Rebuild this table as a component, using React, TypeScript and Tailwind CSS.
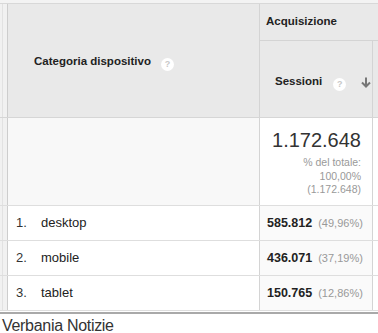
import React from "react";

const Help = () => (
  <span className="inline-flex h-[13px] w-[13px] items-center justify-center rounded-full bg-white text-[9px] font-bold leading-none text-[#c8c8c8]">
    ?
  </span>
);

const rows = [
  { n: "1.", label: "desktop", value: "585.812", pct: "(49,96%)" },
  { n: "2.", label: "mobile", value: "436.071", pct: "(37,19%)" },
  { n: "3.", label: "tablet", value: "150.765", pct: "(12,86%)" },
];

export default function App() {
  return (
    <div
      className="h-[333px] w-[378px] overflow-hidden bg-white text-[#222]"
      style={{ fontFamily: '"Liberation Sans", Arial, sans-serif' }}
    >
      {/* top strip */}
      <div className="h-[3px] bg-[#f3f3f3]" />
      <div className="h-px bg-[#d8d8d8]" />

      {/* header */}
      <div className="flex h-[114px] border-b border-[#d6d6d6] bg-[#e9e9e9]">
        <div className="flex w-[8px] shrink-0 border-r border-[#cdcdcd] bg-[#f1f1f1]">
          <div className="ml-[2px] w-px bg-[#e2e2e2]" />
        </div>
        <div className="flex w-[252px] shrink-0 items-center border-r border-[#d4d4d4] pl-[26px] pt-[3px]">
          <span className="text-[11.5px] font-bold text-[#222]">Categoria dispositivo</span>
          <span className="ml-[10px]">
            <Help />
          </span>
        </div>
        <div className="flex flex-1 flex-col">
          <div className="flex h-[37px] items-center border-b border-[#d4d4d4] pl-[6px]">
            <span className="text-[11.5px] font-bold text-[#222]">Acquisizione</span>
          </div>
          <div className="flex flex-1">
            <div className="flex w-[113px] shrink-0 items-center border-r border-[#d4d4d4] pl-[15px] pt-[6px]">
              <span className="text-[11.5px] font-bold text-[#222]">Sessioni</span>
              <span className="ml-[11px]">
                <Help />
              </span>
              <svg className="ml-[15px]" width="10" height="11" viewBox="0 0 10 11">
                <path d="M5 0.5 V9" stroke="#777" strokeWidth="2" fill="none" />
                <path d="M1 5.5 L5 9.5 L9 5.5" stroke="#777" strokeWidth="2" fill="none" />
              </svg>
            </div>
            <div className="flex-1" />
          </div>
        </div>
      </div>

      {/* total row */}
      <div className="flex h-[88px] border-b border-[#dedede]">
        <div className="flex w-[8px] shrink-0 border-r border-[#cdcdcd] bg-[#f1f1f1]">
          <div className="ml-[2px] w-px bg-[#e2e2e2]" />
        </div>
        <div className="w-[252px] shrink-0 border-r border-[#d4d4d4] bg-[#f8f8f8]" />
        <div className="flex w-[113px] shrink-0 flex-col items-end border-r border-[#d4d4d4] bg-white pr-[11px] pt-[10px]">
          <span className="text-[20px] leading-[24px] text-[#333]">1.172.648</span>
          <span className="mt-[4px] text-right text-[10.5px] leading-[13.5px] text-[#999]">
            % del totale:
            <br />
            100,00%
            <br />
            (1.172.648)
          </span>
        </div>
        <div className="flex-1 bg-white" />
      </div>

      {/* data rows */}
      {rows.map((r) => (
        <div key={r.n} className="flex h-[35px] border-b border-[#dedede]">
          <div className="flex w-[8px] shrink-0 border-r border-[#cdcdcd] bg-[#f1f1f1]">
            <div className="ml-[2px] w-px bg-[#e2e2e2]" />
          </div>
          <div className="flex w-[252px] shrink-0 items-center border-r border-[#d4d4d4] bg-white pl-[8px] text-[13px]">
            <span className="w-[25px] text-[#333]">{r.n}</span>
            <span className="text-[#222]">{r.label}</span>
          </div>
          <div className="flex w-[113px] shrink-0 items-center border-r border-[#d4d4d4] bg-[#fafafa] pl-[7px]">
            <span className="text-[12.5px] font-bold text-[#222]">{r.value}</span>
            <span className="ml-[6px] text-[11px] text-[#999]">{r.pct}</span>
          </div>
          <div className="flex-1 bg-white" />
        </div>
      ))}

      {/* bottom */}
      <div className="h-px bg-white" />
      <div className="h-[2px] bg-[#a9a9a9]" />
      <div className="pl-[2px] pt-[3px] text-[16px] leading-[18px] tracking-[-0.3px] text-[#333]">Verbania Notizie</div>
    </div>
  );
}
